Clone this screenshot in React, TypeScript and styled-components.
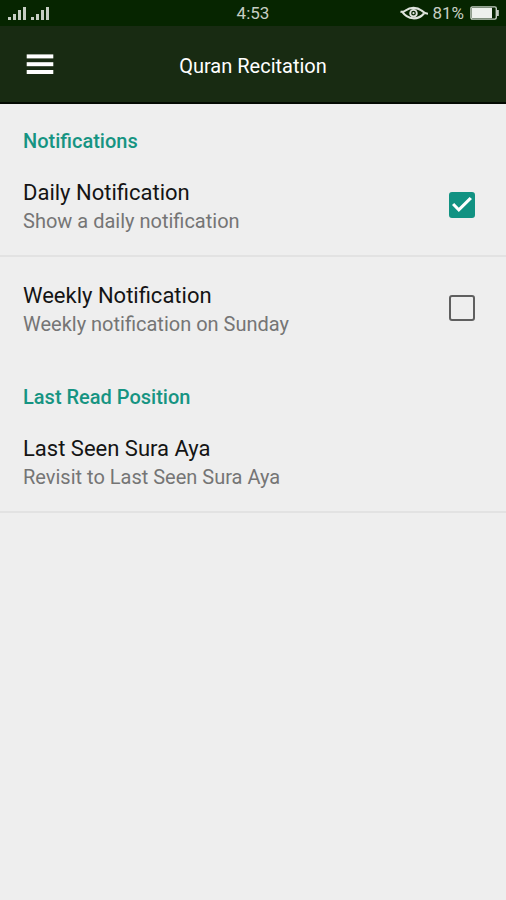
import React from "react";
import styled, { createGlobalStyle } from "styled-components";

const GlobalStyle = createGlobalStyle`
  *, *::before, *::after { box-sizing: border-box; }
  body {
    margin: 0;
    background: #eeeeee;
    font-family: Roboto, "Liberation Sans", sans-serif;
  }
`;

const Screen = styled.div`
  min-height: 100vh;
  background: #eeeeee;
`;

const StatusBar = styled.div`
  display: grid;
  grid-template-columns: 1fr auto 1fr;
  align-items: center;
  height: 26px;
  padding: 0 6px;
  background: #062500;
  color: #c6cec3;
  font-size: 17px;
  line-height: 26px;
`;

const StatusGroup = styled.div<{ $end?: boolean }>`
  display: flex;
  align-items: center;
  justify-content: ${(p) => (p.$end ? "flex-end" : "flex-start")};
  gap: 4px;
`;

const Icon = styled.svg`
  display: block;
  flex: none;
`;

const AppBar = styled.header`
  display: grid;
  grid-template-columns: 80px 1fr 80px;
  align-items: center;
  height: 78px;
  background: #182b12;
  border-bottom: 2px solid #030a02;
`;

const MenuButton = styled.button`
  display: flex;
  align-items: center;
  justify-content: center;
  height: 76px;
  padding: 0;
  border: 0;
  background: none;
  color: #ffffff;
  cursor: pointer;
`;

const AppTitle = styled.h1`
  margin: 0;
  padding-top: 4px;
  color: #ffffff;
  font-size: 20px;
  font-weight: 400;
  line-height: 24px;
  text-align: center;
`;

const SectionTitle = styled.h2`
  margin: 0;
  padding: 25px 24px 1px 23px;
  color: #169482;
  font-size: 20px;
  font-weight: 500;
  line-height: 24px;
`;

const Row = styled.div<{ $divided?: boolean }>`
  display: flex;
  align-items: center;
  justify-content: space-between;
  min-height: 103px;
  padding: 0 31px 0 23px;
  border-bottom: 2px solid ${(p) => (p.$divided ? "#e2e2e2" : "transparent")};
`;

const RowLabel = styled.label`
  flex: 1;
  cursor: pointer;
`;

const RowLink = styled.a`
  flex: 1;
  text-decoration: none;
`;

const RowTitle = styled.span`
  display: block;
  padding-top: 4px;
  color: #141414;
  font-size: 22px;
  line-height: 28px;
`;

const RowSummary = styled.span`
  display: block;
  color: #757575;
  font-size: 20px;
  line-height: 28px;
`;

const Checkbox = styled.input`
  appearance: none;
  flex: none;
  display: grid;
  place-items: center;
  width: 26px;
  height: 26px;
  margin: 0;
  border: 2px solid #5f5f5f;
  border-radius: 3px;
  cursor: pointer;

  &:checked {
    border-color: #119282;
    background: #119282;
  }

  &:checked::before {
    content: "";
    width: 20px;
    height: 15px;
    background: #ffffff;
    clip-path: polygon(0 54%, 11% 40%, 34% 72%, 88% 0, 100% 14%, 34% 100%);
  }
`;

const SIGNAL_BARS = [
  { x: 2, h: 3 },
  { x: 7, h: 6 },
  { x: 12, h: 10 },
  { x: 17, h: 13 },
  { x: 25, h: 3 },
  { x: 30, h: 6 },
  { x: 35, h: 10 },
  { x: 40, h: 13 },
];

function SignalIcon() {
  return (
    <Icon width="46" height="16" viewBox="0 0 46 16" fill="#c6cec3" aria-hidden="true">
      {SIGNAL_BARS.map((bar) => (
        <rect key={bar.x} x={bar.x} y={15 - bar.h} width="3" height={bar.h} />
      ))}
    </Icon>
  );
}

function EyeIcon() {
  return (
    <Icon width="28" height="14" viewBox="0 0 28 14" fill="none" stroke="#dfe4dd" aria-hidden="true">
      <path d="M0.5 5.5C3 6.5 4 6 6 4.3C10 1 17 1 21.5 4.5C23.5 6.5 25 7.5 28 7.7" strokeWidth="2.1" />
      <path d="M2.5 6.2C8 14 18 14.3 24 7.5" strokeWidth="2.1" />
      <circle cx="13.5" cy="7.2" r="3.3" strokeWidth="1.9" />
      <circle cx="13.5" cy="7.2" r="1.1" fill="#dfe4dd" stroke="none" />
    </Icon>
  );
}

function BatteryIcon() {
  return (
    <Icon width="32" height="14" viewBox="-2 0 32 14" fill="none" aria-hidden="true">
      <rect x="0.9" y="0.9" width="25.4" height="12.2" rx="1.5" stroke="#c6cec3" strokeWidth="1.4" />
      <rect x="1.8" y="1.8" width="20.2" height="10.4" fill="#eef0ed" />
      <path d="M26.5 4h2.3v6h-2.3z" fill="#c6cec3" />
    </Icon>
  );
}

function MenuIcon() {
  return (
    <Icon width="28" height="20" viewBox="0 0 28 20" fill="currentColor" aria-hidden="true">
      <rect x="0.7" y="0.4" width="26.6" height="4" />
      <rect x="0.7" y="8.2" width="26.6" height="4" />
      <rect x="0.7" y="16" width="26.6" height="4" />
    </Icon>
  );
}

type CheckRowProps = {
  id: string;
  title: string;
  summary: string;
  checked?: boolean;
  divided?: boolean;
};

function CheckRow({ id, title, summary, checked, divided }: CheckRowProps) {
  return (
    <Row $divided={divided}>
      <RowLabel htmlFor={id}>
        <RowTitle>{title}</RowTitle>
        <RowSummary>{summary}</RowSummary>
      </RowLabel>
      <Checkbox id={id} type="checkbox" defaultChecked={checked} />
    </Row>
  );
}

export default function App() {
  return (
    <Screen>
      <GlobalStyle />
      <StatusBar>
        <StatusGroup>
          <SignalIcon />
        </StatusGroup>
        <span>4:53</span>
        <StatusGroup $end>
          <EyeIcon />
          <span>81%</span>
          <BatteryIcon />
        </StatusGroup>
      </StatusBar>
      <AppBar>
        <MenuButton type="button" aria-label="Open menu">
          <MenuIcon />
        </MenuButton>
        <AppTitle>Quran Recitation</AppTitle>
      </AppBar>
      <main>
        <section>
          <SectionTitle>Notifications</SectionTitle>
          <CheckRow
            id="daily"
            title="Daily Notification"
            summary="Show a daily notification"
            checked
            divided
          />
          <CheckRow
            id="weekly"
            title="Weekly Notification"
            summary="Weekly notification on Sunday"
          />
        </section>
        <section>
          <SectionTitle>Last Read Position</SectionTitle>
          <Row $divided>
            <RowLink href="#last-seen">
              <RowTitle>Last Seen Sura Aya</RowTitle>
              <RowSummary>Revisit to Last Seen Sura Aya</RowSummary>
            </RowLink>
          </Row>
        </section>
      </main>
    </Screen>
  );
}
